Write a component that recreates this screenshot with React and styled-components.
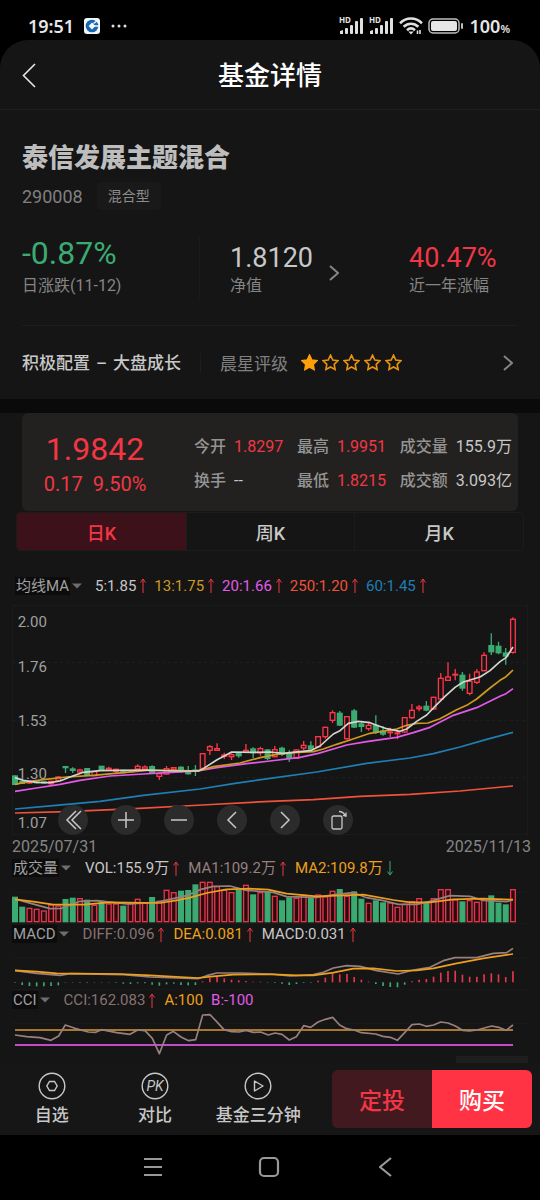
import React, { useState } from 'react';
import styled, { createGlobalStyle } from 'styled-components';

const GlobalStyle = createGlobalStyle`
  * { box-sizing : border-box; }
  body {
    margin : 0;
    background : #000;
    color : #c8c8c8;
    font-family : Roboto, "Noto Sans CJK SC", sans-serif;
  }
  button {
    margin : 0;
    padding : 0;
    border : 0;
    background : none;
    color : inherit;
    font-family : inherit;
    cursor : pointer;
  }
  svg { display : block; }
`;

const RED = '#f23645';
const GREEN = '#3bab72';

// 70 根K线: [涨跌, 最高, 实体上沿, 实体下沿, 最低]
const candles = [
  ['g', 526, 528, 553, 555], ['g', 543, 545, 550, 552], ['r', 543, 545, 549, 552], ['g', 543, 545, 548, 550],
  ['g', 544, 546, 549, 551], ['r', 543, 544, 551, 558], ['r', 528, 531, 541, 543], ['g', 499, 500, 503, 519],
  ['g', 502, 507, 511, 519], ['r', 506, 510, 516, 520], ['g', 504, 506, 524, 526], ['r', 514, 515, 527, 527],
  ['g', 498, 499, 508, 510], ['r', 500, 505, 510, 512], ['r', 506, 508, 514, 523], ['g', 510, 511, 518, 520],
  ['r', 510, 512, 516, 518], ['r', 493, 499, 507, 509], ['r', 496, 501, 507, 509], ['g', 496, 500, 519, 522],
  ['r', 518, 521, 529, 540], ['r', 498, 506, 522, 524], ['r', 501, 503, 508, 510], ['g', 499, 502, 514, 518],
  ['g', 498, 513, 521, 524], ['g', 495, 510, 513, 528], ['r', 460, 461, 505, 505], ['r', 435, 440, 451, 465],
  ['r', 430, 446, 451, 453], ['r', 458, 465, 469, 477], ['r', 460, 464, 470, 480], ['g', 457, 459, 467, 473],
  ['r', 432, 451, 457, 459], ['g', 442, 447, 458, 474], ['r', 440, 446, 459, 467], ['g', 448, 450, 475, 480],
  ['r', 438, 449, 470, 472], ['g', 440, 445, 462, 468], ['g', 451, 460, 475, 486], ['r', 448, 450, 475, 477],
  ['r', 423, 436, 444, 450], ['g', 424, 438, 447, 450], ['r', 408, 410, 440, 443], ['r', 380, 382, 410, 416],
  ['r', 331, 338, 361, 369], ['g', 333, 340, 375, 378], ['r', 348, 350, 416, 419], ['g', 327, 333, 381, 384],
  ['g', 365, 372, 379, 396], ['r', 365, 376, 386, 392], ['g', 346, 376, 396, 402], ['g', 379, 393, 402, 407],
  ['r', 383, 396, 398, 411], ['r', 392, 399, 401, 418], ['r', 351, 353, 396, 398], ['r', 312, 331, 353, 357],
  ['r', 315, 321, 326, 334], ['g', 303, 319, 330, 334], ['r', 290, 292, 327, 329], ['r', 219, 235, 297, 299],
  ['r', 187, 231, 241, 243], ['r', 207, 223, 225, 241], ['g', 216, 226, 264, 272], ['r', 221, 244, 280, 286],
  ['r', 207, 216, 247, 252], ['r', 157, 166, 212, 214], ['g', 100, 137, 155, 165], ['g', 125, 139, 158, 163],
  ['g', 144, 159, 168, 194], ['r', 52, 58, 157, 161],
];

// 成交量柱顶
const volumes = [
  202, 232, 235, 238, 243, 225, 228, 209, 205, 206, 211, 226, 214, 222, 222, 229, 222, 208, 220, 203,
  214, 181, 188, 184, 182, 165, 157, 157, 170, 181, 188, 182, 166, 195, 188, 186, 199, 213, 204, 205,
  196, 206, 195, 201, 184, 179, 199, 186, 208, 220, 213, 219, 219, 232, 223, 215, 206, 218, 206, 179,
  179, 210, 216, 212, 217, 207, 198, 220, 225, 179,
];
const volumeUp = 'ggrrrrrggrgrgrrgrrrgrrrgggrrrrrgrgrgrggrrgrrrgrggrggrrrrrgrrrrgrrrgggr';

// MACD 柱, 正数为红
const macd = [
  -1, -8, -11, -12, -12, -11, -9, -1, -1, -1, -1, -1, -1, -1, -1, -4, -5, -3, -3, -7,
  -10, -6, -4, -8, -9, -8, 3, 13, 18, 12, 8, 6, 4, 2, 2, -1, -2, -4, -8, -5,
  -2, -1, 5, 14, 28, 24, 25, 16, 8, 2, -5, -11, -14, -15, -7, 3, 8, 10, 17, 29,
  34, 35, 23, 17, 17, 24, 27, 24, 16, 33,
];

const barX = (i) => 45 + i * 21.65;

const Screen = styled.div`
  min-height : 100vh;
  background : #000;
`;

const StatusBar = styled.div`
  display : flex;
  align-items : center;
  height : 40px;
  padding : 12px 30px 0 28px;
  color : #e6e6e6;
  font-family : "Noto Sans", sans-serif;
  font-size : 18px;
  line-height : 26px;
  font-weight : 600;
  gap : 10px;
`;

const StatusRight = styled.div`
  display : flex;
  align-items : center;
  margin-left : auto;
  gap : 5px;

  small {
    font-size : 11px;
    line-height : 11px;
  }
`;

const Page = styled.main`
  background : #151515;
  border-radius : 28px 28px 0 0;
`;

const Header = styled.header`
  display : grid;
  grid-template-columns : 44px 1fr 44px;
  align-items : center;
  height : 70px;
  padding : 0 16px;
  border-bottom : 1px solid #1f1f1f;
`;

const HeaderTitle = styled.h1`
  margin : 0;
  padding-top : 3px;
  color : #fff;
  font-size : 26px;
  line-height : 36px;
  font-weight : 500;
  text-align : center;
`;

const Fund = styled.section`
  padding : 28px 22px 0;
`;

const FundName = styled.h2`
  margin : 0;
  font-size : 26px;
  line-height : 40px;
  font-weight : 900;
  color : #bdbdbd;
`;

const TagRow = styled.div`
  display : flex;
  align-items : center;
  gap : 14px;
  margin-top : 4px;
  color : #808080;
  font-size : 18px;
`;

const Tag = styled.span`
  padding : 0 11px;
  border-radius : 3px;
  background : #191919;
  color : #8c8c8c;
  font-size : 14px;
  line-height : 28px;
`;

const Stats = styled.div`
  display : grid;
  grid-template-columns : 177fr 210fr 109fr;
  margin-top : 27px;
  padding-bottom : 27px;
  border-bottom : 1px solid #1d1d1d;
`;

const Stat = styled.div`
  color : #858585;
  font-size : 16px;
  line-height : 24px;
  white-space : nowrap;
`;

const StatValue = styled.div`
  padding : ${ props => props.$big ? '0 0 5px' : '5px 0 0' };
  color : ${ props => props.$color };
  font-size : ${ props => props.$big ? 32 : 27 }px;
  line-height : 32px;
`;

const NetValue = styled.button`
  display : flex;
  align-items : center;
  gap : 16px;
  padding-left : 30px;
  border-left : 1px solid #1b1b1b;
  text-align : left;

  svg { margin-top : 10px; }
`;

const Rating = styled.div`
  display : flex;
  align-items : center;
  height : 73px;
  padding-right : 5px;
  font-size : 17px;
`;

const Style = styled.span`
  display : flex;
  gap : 6px;
  padding-right : 19px;
  border-right : 1px solid #1d1d1d;
  font-weight : 500;
  line-height : 20px;
`;

const RatingLabel = styled.span`
  padding : 0 13px 0 19px;
  color : #808080;
`;

const Stars = styled.div`
  display : flex;
  gap : 4px;
`;

const MoreButton = styled.button`
  margin-left : auto;
`;

const Band = styled.div`
  height : 14px;
  background : #0a0a0a;
`;

const QuoteCard = styled.section`
  display : grid;
  grid-template-columns : 146fr 350fr;
  align-items : center;
  height : 98px;
  margin : 0 22px;
  padding-top : 4px;
  border-radius : 6px;
  background : #22211f;
`;

const Price = styled.div`
  padding-top : 2px;
  color : ${ RED };
  font-size : 32px;
  line-height : 38px;
  text-align : center;

  div {
    display : flex;
    justify-content : center;
    gap : 10px;
    font-size : 20px;
    line-height : 32px;
  }
`;

const Quotes = styled.div`
  display : grid;
  grid-template-columns : 103fr 103fr 112fr;
  row-gap : 10px;
  padding : 0 6px 0 26px;
`;

const Quote = styled.div`
  display : flex;
  gap : 8px;
  color : ${ props => props.$red ? RED : '#c8c8c8' };
  font-size : 16px;
  line-height : 24px;
  white-space : nowrap;

  span {
    color : #949494;
    font-weight : 500;
  }
`;

const Tabs = styled.div`
  display : grid;
  grid-template-columns : repeat(3, 1fr);
  margin : 1px 16px 0;
  border-radius : 4px;
  border : 1px solid #1c1c1c;
  overflow : hidden;
`;

const Tab = styled.button`
  height : 37px;
  background : ${ props => props.$active ? '#3c111a' : 'transparent' };
  color : ${ props => props.$active ? RED : '#c8c8c8' };
  font-size : 18px;
  font-weight : 500;

  & + & { border-left : 1px solid #1c1c1c; }
`;

const Charts = styled.section`
  padding : 22px 12px 0;
`;

const Legend = styled.div`
  display : flex;
  align-items : center;
  gap : ${ props => props.$main ? 7 : 8 }px;
  height : ${ props => props.$main ? 32 : 20 }px;
  padding : ${ props => props.$main ? '0 0 7px 3px' : '0' };
  font-size : 15px;
  line-height : 20px;
  white-space : nowrap;
`;

const Picker = styled.button`
  display : flex;
  align-items : center;
  gap : 2px;
  margin-right : 6px;
  color : #a0a0a0;
  font-size : 15px;
  line-height : 18px;

  span {
    padding : 0 1px;
    background : #0c0c0c;
  }
`;

const LegendItem = styled.span`
  display : flex;
  align-items : center;
  gap : 3px;
  color : ${ props => props.$color };
`;

const ChartBox = styled.div`
  position : relative;
`;

const Chart = styled.svg`
  width : 100%;
  height : auto;
  font-family : Roboto, sans-serif;
  font-size : 45px;
`;

const Tools = styled.div`
  position : absolute;
  left : 9%;
  bottom : 0;
  display : flex;
  justify-content : space-between;
  width : 57%;
`;

const Tool = styled.button`
  display : flex;
  align-items : center;
  justify-content : center;
  width : 30px;
  height : 30px;
  border-radius : 50%;
  background : #2b2b2b;
`;

const Dates = styled.div`
  display : flex;
  justify-content : space-between;
  margin-right : -3px;
  padding-top : 1px;
  color : #858585;
  font-size : 16px;
  line-height : 22px;
`;

const NextPanel = styled.div`
  height : 7px;
  margin-left : auto;
  width : 14%;
  background : #1e1e1e;
`;

const ActionBar = styled.footer`
  display : grid;
  grid-template-columns : 31fr 23fr;
  height : 72px;
  background : #161616;
`;

const Actions = styled.div`
  display : grid;
  grid-template-columns : repeat(3, 1fr);
`;

const Action = styled.button`
  display : flex;
  flex-direction : column;
  align-items : center;
  padding-top : 9px;
  font-size : 17px;
  line-height : 26px;
  font-weight : 500;
  white-space : nowrap;
  gap : 2px;
`;

const Trade = styled.div`
  display : grid;
  grid-template-columns : 1fr 1fr;
  margin : 7px 8px 7px 22px;
  border-radius : 6px;
  overflow : hidden;
`;

const TradeButton = styled.button`
  background : ${ props => props.$primary ? '#ff3344' : '#42191f' };
  color : ${ props => props.$primary ? '#fff' : RED };
  font-size : 23px;
  font-weight : 500;
`;

const NavBar = styled.nav`
  display : flex;
  justify-content : center;
  align-items : center;
  gap : 86px;
  height : 64px;
  padding-right : 2px;
`;

const NavButton = styled.button`
  display : flex;
  justify-content : center;
  width : 30px;
`;

function Signal() {
  return (
    <svg width="25" height="24" viewBox="0 -3 25 24" fill="#e0e0e0">
      <text x="0" y="6" fontSize="8" fontWeight="700" fontFamily="Noto Sans, sans-serif">HD</text>
      <path d="M1 17v-3l3-1v4z" />
      <rect x="6" y="11" width="3" height="6" rx="1" />
      <rect x="11" y="8" width="3" height="9" rx="1" />
      <rect x="16" y="4" width="3" height="13" rx="1" />
      <rect x="21" y="1" width="3" height="16" rx="1" />
    </svg>
  )
}

function Wifi() {
  return (
    <svg width="24" height="18" viewBox="0 0 24 18" fill="none" stroke="#e0e0e0" strokeWidth="2.6">
      <path d="M1 6.2C7.5 0 16.5 0 23 6.2" />
      <path d="M4.6 9.8c4.3-4 10.5-4 14.8 0" />
      <path d="M8 13.2c2.4-2.2 5.6-2.2 8 0" />
      <path d="M9.3 14.5h5.4L12 17.5z" fill="#e0e0e0" stroke="none" />
      <path d="M18.500 17v-3.500M21 13v4" strokeWidth="1.6" />
    </svg>
  )
}

function Chevron({ left, w = 10, h = 16, color = '#858585', stroke = 2 }) {
  return (
    <svg width={w} height={h} viewBox={`0 0 ${w} ${h}`} fill="none" stroke={color} strokeWidth={stroke}>
      <path d={left ? `M${w - 1} 1L1 ${h / 2}L${w - 1} ${h - 1}` : `M1 1L${w - 1} ${h / 2}L1 ${h - 1}`} />
    </svg>
  )
}

function Star({ filled }) {
  return (
    <svg width="17" height="17" viewBox="0 0 17 17" fill={filled ? '#ff9f0a' : 'none'} stroke={filled ? '#ff9f0a' : '#ea930f'} strokeWidth="1.6">
      <path d="M8.5 1.2l2.3 4.8 5.2.7-3.8 3.6.9 5.2-4.6-2.5-4.6 2.5.9-5.2L1 6.700l5.200-.7z" />
    </svg>
  )
}

function Arrow({ down }) {
  return (
    <svg width="8" height="15" viewBox="0 0 8 15" fill="none" stroke={down ? GREEN : RED}>
      <path d={down ? 'M4 0v14M1.500 10.500L4 14l2.500-3.500' : 'M4 15V1M1.500 4.500L4 1l2.500 3.500'} />
    </svg>
  )
}

function LegendRow({ name, items, main }) {
  return (
    <Legend $main={main}>
      <Picker type="button">
        <span>{name}</span>
        <svg width="10" height="6" viewBox="0 0 10 6" fill="#6e6e6e"><path d="M0 0.500h10L5 5.500z" /></svg>
      </Picker>
      {
        items.map(([text, color, dir]) => (
          <LegendItem key={text} $color={color}>
            {text}{ dir && <Arrow down={dir === 'down'} /> }
          </LegendItem>
        ))
      }
    </Legend>
  )
}

function Line({ points, color, width = 5 }) {
  return <polyline points={points} fill="none" stroke={color} strokeWidth={width} strokeLinejoin="round" />
}

function KLine() {
  return (
    <Chart viewBox="36 15 1548 690">
      <rect x="37" y="17" width="1546" height="687" fill="none" stroke="#1d1d1d" strokeWidth="3" />
      {
        [188, 361, 533].map(y => (
          <path key={y} d={`M37 ${y}H1583`} stroke="#202020" strokeWidth="3" strokeDasharray="9 9" />
        ))
      }
      {
        [['2.00', 82], ['1.76', 215], ['1.53', 377], ['1.30', 537], ['1.07', 685]].map(([t, y]) => (
          <text key={t} x="53" y={y} fill="#a0a0a0">{t}</text>
        ))
      }
      {
        candles.map(([type, high, top, bottom, low], i) => {
          const x = barX(i);
          const color = type === 'r' ? '#ff3548' : GREEN;
          return (
            <g key={i} stroke={color} strokeWidth="4">
              <path d={`M${x} ${high}V${top}M${x} ${bottom}V${low}`} />
              <rect x={x - 7} y={top} width="14" height={bottom - top} fill={type === 'r' ? 'none' : color} />
            </g>
          )
        })
      }
      <Line color="#f0523a" points="45,639 200,635 405,626 607,615 810,604 940,599 1080,589 1230,583 1380,573 1539,558" />
      <Line color="#1f7fb5" points="45,627 160,617 300,604 430,586 600,567 700,551 810,535 950,516 1100,490 1230,474 1300,461 1380,441 1460,418 1539,397" />
      <Line color="#e25be8" points="45,574 110,564 180,553 240,541 330,528 430,522 500,518 594,513 650,503 740,491 810,483 900,472 955,460 1000,447 1040,435 1100,425 1190,412 1240,398 1290,382 1360,346 1430,323 1500,289 1518,281 1539,266" />
      <Line color="#d09a20" points="45,553 85,545 130,539 200,531 280,526 370,518 440,511 520,511 594,513 640,500 720,489 780,473 830,463 880,458 940,455 970,447 1010,433 1050,420 1110,400 1190,387 1220,376 1250,370 1284,369 1320,356 1370,329 1400,316 1430,297 1470,264 1500,241 1518,230 1539,210" />
      <Line color="#d4d4d0" points="45,533 70,541 110,547 150,548 180,543 210,531 250,517 300,512 440,510 520,513 594,513 610,506 650,480 695,456 760,457 810,456 850,460 900,455 935,451 960,438 1000,402 1020,392 1045,370 1075,364 1110,368 1130,376 1160,386 1200,394 1220,387 1250,364 1280,345 1310,314 1335,289 1365,262 1390,246 1440,231 1470,212 1500,185 1518,173 1528,158 1539,141" />
    </Chart>
  )
}

function VolumeChart() {
  return (
    <Chart viewBox="36 144 1548 138">
      <path d="M37 188H1583M37 280H1583" stroke="#1b1b1b" strokeWidth="3" />
      {
        volumes.map((top, i) => {
          const up = volumeUp[i] === 'r';
          return (
            <rect key={i} x={barX(i) - 7} y={top} width="14" height={275 - top}
              fill={up ? '#2a0b11' : GREEN} stroke={up ? '#e6364a' : GREEN} strokeWidth="4" />
          )
        })
      }
      <Line color="#98807f" points="45,207 95,221 150,236 185,235 240,214 290,212 380,222 465,218 520,206 560,197 600,179 640,169 690,168 740,181 820,187 860,200 950,202 1010,193 1060,188 1100,203 1150,212 1195,223 1250,223 1290,214 1350,197 1410,199 1450,211 1520,215 1539,209" />
      <Line color="#eda01c" points="45,208 100,215 160,224 250,224 330,217 480,219 530,211 570,203 620,189 680,178 750,176 805,179 860,191 950,199 1090,194 1180,210 1230,217 1290,217 1360,208 1450,206 1539,209" />
    </Chart>
  )
}

function MacdChart() {
  return (
    <Chart viewBox="36 342 1548 138">
      <path d="M37 384H1583M37 478H1583" stroke="#1b1b1b" strokeWidth="3" />
      {
        macd.map((v, i) => (
          <path key={i} d={`M${barX(i)} 457v${-v}`} stroke={v > 0 ? '#e6364a' : GREEN} strokeWidth="5" />
        ))
      }
      <Line color="#98807f" points="45,422 110,430 180,436 210,431 370,434 450,441 594,446 620,437 650,429 720,429 810,432 870,438 940,434 970,427 1000,414 1040,407 1080,409 1130,422 1195,432 1240,420 1290,412 1330,392 1365,383 1430,383 1480,370 1520,368 1539,355" />
      <Line color="#eda01c" points="45,421 110,425 170,430 360,432 450,436 594,444 640,439 700,434 820,433 890,436 940,436 1000,428 1060,416 1120,415 1190,423 1250,421 1300,415 1370,400 1450,385 1539,372" />
    </Chart>
  )
}

function CciChart() {
  return (
    <Chart viewBox="36 540 1548 138">
      <path d="M37 580H1583" stroke="#1b1b1b" strokeWidth="3" />
      <path d="M45 600H1539" stroke="#dc9a34" strokeWidth="5" />
      <path d="M45 645H1539" stroke="#c24bc8" strokeWidth="6" />
      <Line color="#98807f" points="45,615 80,620 120,623 153,631 176,618 196,585 225,595 265,606 287,607 305,599 350,608 390,613 413,600 435,602 457,625 478,671 500,615 520,604 543,621 566,632 587,629 608,555 630,554 650,575 672,599 695,605 717,606 738,601 760,607 782,606 805,615 825,609 846,613 868,630 889,620 911,587 932,592 954,576 976,568 998,562 1019,585 1040,596 1062,600 1084,608 1127,612 1149,619 1171,622 1192,631 1214,608 1236,584 1258,582 1279,589 1301,585 1322,576 1344,579 1366,588 1388,601 1409,603 1431,600 1475,588 1496,592 1518,601 1539,585" />
    </Chart>
  )
}

const toolIcons = [
  ['最左', <path d="M14 2L5 11l9 9M19 2l-9 9 9 9" />],
  ['放大', <path d="M11 3v16M3 11h16" />],
  ['缩小', <path d="M3 11h16" />],
  ['左移', <path d="M15 3L7 11l8 8" />],
  ['右移', <path d="M7 3l8 8-8 8" />],
  ['横屏', <g strokeWidth="1.3"><rect x="5" y="7" width="10" height="13" rx="1.5" /><path d="M12 2.500c3 0 5 1.300 6.500 4.500M19 3.500V7.200l-3-.8" /></g>],
];

function App() {

  let [tab, setTab] = useState(0);

  return (
    <Screen>
      <GlobalStyle />

      <StatusBar>
        <span>19:51</span>
        <svg width="16" height="16" viewBox="0 0 16 16">
          <rect width="16" height="16" rx="3" fill="#f2f7fc" />
          <circle cx="8" cy="8" r="6.3" fill="#1767ae" />
          <path d="M8 4.600l3.400 3.400L8 11.400 4.600 8z" fill="#f2f7fc" />
          <path d="M10 8h6M9.500 5.500l4-3" stroke="#f2f7fc" strokeWidth="1.5" />
        </svg>
        <svg width="18" height="4" viewBox="0 0 18 4" fill="#e0e0e0">
          <circle cx="3" cy="2" r="1.5" /><circle cx="9" cy="2" r="1.5" /><circle cx="15" cy="2" r="1.5" />
        </svg>
        <StatusRight>
          <Signal />
          <Signal />
          <Wifi />
          <svg width="36" height="16" viewBox="0 0 36 16">
            <rect x="1" y="1" width="30" height="14" rx="4" fill="none" stroke="#bdbdbd" strokeWidth="1.5" />
            <rect x="3" y="3" width="26" height="10" rx="2" fill="#e6e6e6" />
            <rect x="33" y="5" width="2" height="6" rx="1" fill="#bdbdbd" />
          </svg>
          <span>100<small>%</small></span>
        </StatusRight>
      </StatusBar>

      <Page>
        <Header>
          <button type="button" aria-label="返回">
            <svg width="26" height="26" viewBox="0 0 26 26" fill="none" stroke="#e6e6e6" strokeWidth="1.6">
              <path d="M19 2L7.500 13.500 19 25" />
            </svg>
          </button>
          <HeaderTitle>基金详情</HeaderTitle>
        </Header>

        <Fund>
          <FundName>泰信发展主题混合</FundName>
          <TagRow>290008<Tag>混合型</Tag></TagRow>

          <Stats>
            <Stat>
              <StatValue $big $color={GREEN}>-0.87%</StatValue>
              日涨跌(11-12)
            </Stat>
            <NetValue type="button">
              <Stat>
                <StatValue $color="#c8c8c8">1.8120</StatValue>
                净值
              </Stat>
              <Chevron />
            </NetValue>
            <Stat>
              <StatValue $color={RED}>40.47%</StatValue>
              近一年涨幅
            </Stat>
          </Stats>

          <Rating>
            <Style><span>积极配置</span><span>–</span><span>大盘成长</span></Style>
            <RatingLabel>晨星评级</RatingLabel>
            <Stars>
              { [1, 2, 3, 4, 5].map(n => <Star key={n} filled={n === 1} />) }
            </Stars>
            <MoreButton type="button" aria-label="更多"><Chevron /></MoreButton>
          </Rating>
        </Fund>

        <Band />

        <QuoteCard>
          <Price>
            1.9842
            <div><span>0.17</span><span>9.50%</span></div>
          </Price>
          <Quotes>
            <Quote $red><span>今开</span>1.8297</Quote>
            <Quote $red><span>最高</span>1.9951</Quote>
            <Quote><span>成交量</span>155.9万</Quote>
            <Quote><span>换手</span>--</Quote>
            <Quote $red><span>最低</span>1.8215</Quote>
            <Quote><span>成交额</span>3.093亿</Quote>
          </Quotes>
        </QuoteCard>

        <Tabs>
          {
            ['日K', '周K', '月K'].map((name, i) => (
              <Tab key={name} type="button" $active={tab === i} onClick={ () => setTab(i) }>{name}</Tab>
            ))
          }
        </Tabs>

        <Charts>
          <LegendRow main name="均线MA" items={[
            ['5:1.85', '#c8c8c8', 'up'],
            ['13:1.75', '#d09a20', 'up'],
            ['20:1.66', '#e25be8', 'up'],
            ['250:1.20', '#f0523a', 'up'],
            ['60:1.45', '#1f7fb5', 'up'],
          ]} />
          <ChartBox>
            <KLine />
            <Tools>
              {
                toolIcons.map(([name, icon]) => (
                  <Tool key={name} type="button" aria-label={name}>
                    <svg width="22" height="22" viewBox="0 0 22 22" fill="none" stroke="#c8c8c8" strokeWidth="1.5">{icon}</svg>
                  </Tool>
                ))
              }
            </Tools>
          </ChartBox>
          <Dates><span>2025/07/31</span><span>2025/11/13</span></Dates>

          <LegendRow name="成交量" items={[
            ['VOL:155.9万', '#c8c8c8', 'up'],
            ['MA1:109.2万', '#98807f', 'up'],
            ['MA2:109.8万', '#eda01c', 'down'],
          ]} />
          <VolumeChart />

          <LegendRow name="MACD" items={[
            ['DIFF:0.096', '#877271', 'up'],
            ['DEA:0.081', '#eda01c', 'up'],
            ['MACD:0.031', '#c8c8c8', 'up'],
          ]} />
          <MacdChart />

          <LegendRow name="CCI" items={[
            ['CCI:162.083', '#877271', 'up'],
            ['A:100', '#eda01c'],
            ['B:-100', '#e25be8'],
          ]} />
          <CciChart />
          <NextPanel />
        </Charts>
      </Page>

      <ActionBar>
        <Actions>
          <Action type="button">
            <svg width="28" height="28" viewBox="0 0 28 28" fill="none" stroke="#c8c8c8" strokeWidth="1.4">
              <circle cx="14" cy="14" r="12.8" />
              <path d="M11.500 9.500h5l2.700 4.500-2.700 4.500h-5L8.800 14z" />
            </svg>
            自选
          </Action>
          <Action type="button">
            <svg width="28" height="28" viewBox="0 0 28 28" fill="none" stroke="#c8c8c8" strokeWidth="1.4">
              <circle cx="14" cy="14" r="12.8" />
              <text x="14" y="19" fontSize="14" fontWeight="400" fontStyle="italic" textAnchor="middle" fill="#c8c8c8" stroke="none">PK</text>
            </svg>
            对比
          </Action>
          <Action type="button">
            <svg width="28" height="28" viewBox="0 0 28 28" fill="none" stroke="#c8c8c8" strokeWidth="1.4">
              <circle cx="14" cy="14" r="12.8" />
              <path d="M10.500 9v10l8.500-5z" strokeLinejoin="round" />
            </svg>
            基金三分钟
          </Action>
        </Actions>
        <Trade>
          <TradeButton type="button">定投</TradeButton>
          <TradeButton type="button" $primary>购买</TradeButton>
        </Trade>
      </ActionBar>

      <NavBar>
        <NavButton type="button" aria-label="菜单">
          <svg width="20" height="20" viewBox="0 0 20 20" stroke="#999" strokeWidth="2.2"><path d="M1 2h18M1 10h18M1 18h18" /></svg>
        </NavButton>
        <NavButton type="button" aria-label="主页">
          <svg width="22" height="22" viewBox="0 0 22 22" fill="none" stroke="#999" strokeWidth="2.2"><rect x="2" y="2" width="18" height="18" rx="4" /></svg>
        </NavButton>
        <NavButton type="button" aria-label="后退">
          <svg width="14" height="20" viewBox="0 0 14 20" fill="none" stroke="#999" strokeWidth="2.2"><path d="M13 1L2 10l11 9" strokeLinejoin="round" /></svg>
        </NavButton>
      </NavBar>
    </Screen>
  )
}

export default App;
